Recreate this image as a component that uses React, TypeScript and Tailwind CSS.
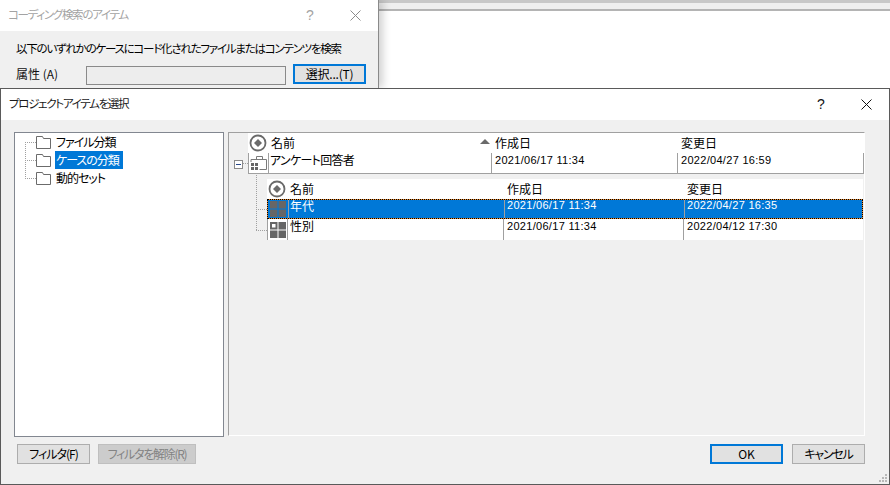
import React from 'react';

const uiFont = "font-['Noto_Sans_CJK_JP','Noto_Sans',sans-serif] [font-feature-settings:'palt']";
const dateFont = "font-['Liberation_Sans',sans-serif] text-[11px] tracking-[0.3px]";

function CloseGlyph({ color }: { color: string }) {
  return (
    <svg width="11" height="11" viewBox="0 0 11 11" fill="none" stroke={color} strokeWidth="1">
      <path d="M0.5 0.5 L10.5 10.5 M10.5 0.5 L0.5 10.5" />
    </svg>
  );
}

function Folder() {
  return (
    <svg width="15" height="13" viewBox="0 0 15 13" fill="none" stroke="#6b6b6b" strokeWidth="1" className="shrink-0">
      <path d="M0.5 12.5 V0.5 H6.5 L7.5 2.5 H14.5 V12.5 Z" />
    </svg>
  );
}

function SortRing() {
  return (
    <svg width="18" height="18" viewBox="0 0 18 18" className="shrink-0">
      <circle cx="9" cy="9" r="7.5" fill="#fff" stroke="#6a6a6a" strokeWidth="1.8" />
      <path d="M9 5 L13 9 L9 13 L5 9 Z" fill="#6a6a6a" />
    </svg>
  );
}

function Briefcase() {
  return (
    <svg width="18" height="18" viewBox="0 0 18 18" className="shrink-0">
      <path d="M1 8 V5.5 H16.500 V15.500 H9.500" fill="none" stroke="#7a7a7a" strokeWidth="1" />
      <path d="M6.5 5 V2.5 H12.5 V5" fill="none" stroke="#7a7a7a" strokeWidth="1" />
      <path d="M1 9h3v3H1z M5 9h3v3H5z M1 13h3v3H1z M5 13h3v3H5z" fill="#666" />
    </svg>
  );
}

function Squares({ hollow }: { hollow?: boolean }) {
  return (
    <svg width="18" height="18" viewBox="0 0 18 18" className="shrink-0">
      <rect x="1" y="1" width="7.500" height="7.500" fill="#666" />
      {hollow && <rect x="3" y="3" width="3.500" height="3.500" fill="#fff" />}
      <rect x="9.500" y="1" width="7.500" height="7.500" fill="#666" />
      <rect x="1" y="9.500" width="7.500" height="7.500" fill="#666" />
      <rect x="9.500" y="9.500" width="7.500" height="7.500" fill="#666" />
    </svg>
  );
}

function TitleBar({ title, muted }: { title: string; muted?: boolean }) {
  return (
    <div className="h-[31px] shrink-0 bg-white flex items-center">
      <span className={`pl-2 pb-[1px] text-[11.5px] tracking-[-1.3px] ${muted ? 'text-[#a3a3a3]' : 'text-[#1a1a1a]'}`}>{title}</span>
      <div className="ml-auto flex items-center">
        <span className={`w-[46px] text-center text-[14px] pl-[2px] font-['Liberation_Sans',sans-serif] ${muted ? 'text-[#a3a3a3]' : 'text-[#111]'}`}>?</span>
        <span className="w-[46px] flex justify-center">
          <CloseGlyph color={muted ? '#8c8c8c' : '#111'} />
        </span>
      </div>
    </div>
  );
}

function Button({ label, variant, className }: { label: string; variant?: 'focus' | 'disabled'; className?: string }) {
  const look =
    variant === 'focus'
      ? 'bg-[#e1e1e1] border-2 border-[#0078d7] text-black'
      : variant === 'disabled'
        ? 'bg-[#cccccc] border border-[#bfbfbf] text-[#838383]'
        : 'bg-[#e1e1e1] border border-[#adadad] text-black';
  return (
    <div className={`h-[20px] flex items-center justify-center text-[12px] leading-none whitespace-nowrap ${look} ${className ?? ''}`}>
      {label}
    </div>
  );
}

function TreeRow({ label, selected }: { label: string; selected?: boolean }) {
  return (
    <div className="h-[18px] flex items-center pl-[21px]">
      <Folder />
      <span className={`ml-[4px] h-[18px] flex items-center px-[1px] text-[12px] tracking-[-1px] leading-none ${selected ? 'bg-[#0078d7] text-white pr-[4px]' : 'text-black'}`}>
        {label}
      </span>
    </div>
  );
}

const parentCols = 'grid grid-cols-[20px_223px_186px_187px]';
const childCols = 'grid grid-cols-[20px_216px_180px_180px]';
const sep = 'border-l border-[#a0a0a0]';

function ChildRow({ name, created, changed, selected }: { name: string; created: string; changed: string; selected?: boolean }) {
  const lead = selected ? 'leading-[11px]' : 'leading-[14px]';
  const body = (
    <div className={`${childCols} h-full ${selected ? 'bg-[#0078d7] text-white' : 'bg-white text-black'}`}>
      <div className={`flex items-center justify-center ${selected ? '' : 'border-l border-[#a0a0a0]'}`}>
        <Squares hollow={!selected} />
      </div>
      <div className={`${sep} ${selected ? 'pl-[1px]' : 'pl-[2px]'} text-[12px] ${lead}`}>{name}</div>
      <div className={`${sep} ${selected ? 'pl-[2px]' : 'pl-[3px]'} ${dateFont} ${lead}`}>{created}</div>
      <div className={`${sep} ${selected ? 'pl-[2px]' : 'pl-[3px]'} ${dateFont} ${lead}`}>{changed}</div>
    </div>
  );
  if (selected) {
    return <div className="h-[20px] bg-[#e8872a] border border-dotted border-black">{body}</div>;
  }
  return <div className="h-[21px]">{body}</div>;
}

export default function App() {
  return (
    <div className={`relative w-[890px] h-[485px] overflow-hidden bg-white ${uiFont}`}>
      {/* window behind */}
      <div className="h-[3px] bg-[#c8c8c8]" />
      <div className="h-[6px] bg-[#efefef]" />
      <div className="h-[2px] bg-[#b4b4b4]" />

      <div className="absolute left-0 top-0 w-[379px] h-[88px] flex flex-col bg-[#f0f0f0] border-r border-[#8a8a8a] shadow-[4px_0_8px_rgba(0,0,0,0.18)]">
        <TitleBar title="コーディング検索のアイテム" muted />
        <div className="pl-4 pt-[9px] text-[11.5px] tracking-[-1.23px] leading-[16px] text-black whitespace-nowrap">
          以下のいずれかのケースにコード化されたファイルまたはコンテンツを検索
        </div>
        <div className="flex items-start pl-4 pt-[8px]">
          <span className="w-[70px] text-[12px] leading-[20px] text-[#111]">属性 (A)</span>
          <div className="w-[200px] h-[19px] mt-[2px] bg-[#ededed] border border-[#8a8a8a]" />
          <Button label="選択...(T)" variant="focus" className="w-[73px] ml-[7px] tracking-[-0.2px]" />
        </div>
      </div>

      {/* main dialog */}
      <div className="absolute left-0 top-[88px] w-[890px] h-[397px] flex flex-col bg-[#f0f0f0] border border-[#5a5a5a]">
        <TitleBar title="プロジェクトアイテムを選択" />

        <div className="flex pl-[13px] pt-[12px] gap-[4px] h-[317px] shrink-0">
          {/* tree */}
          <div className="relative w-[210px] h-[305px] bg-white border border-[#828790]">
            <svg className="absolute left-[9px] top-[8px]" width="12" height="38" fill="none" stroke="#a0a0a0" strokeDasharray="1 1">
              <path d="M1.500 1 V37 M1 1.500 H12 M1 19.500 H12 M1 37.500 H12" />
            </svg>
            <TreeRow label="ファイル分類" />
            <TreeRow label="ケースの分類" selected />
            <TreeRow label="動的セット" />
          </div>

          {/* detail grid */}
          <div className="relative w-[637px] h-[304px] border-t border-l border-[#a0a0a0] border-b border-b-white border-r border-r-white">
            <div className="ml-[19px] w-[616px]">
              <div className={`${parentCols} h-[20px] bg-white text-black text-[12px] leading-none`}>
                <div className="flex items-center justify-center"><SortRing /></div>
                <div className="relative flex items-center pl-[3px]">
                  名前
                  <span className="absolute right-[1px] top-[6px] w-0 h-0 border-x-[5px] border-x-transparent border-b-[5px] border-b-[#6a6a6a]" />
                </div>
                <div className="flex items-center pl-[4px]">作成日</div>
                <div className="flex items-center pl-[4px]">変更日</div>
              </div>
              <div className={`${parentCols} h-[21px] bg-white text-black border-b border-r border-[#a0a0a0]`}>
                <div className="flex items-center justify-center border-l border-[#a0a0a0]"><Briefcase /></div>
                <div className={`${sep} pl-[1px] text-[12px] tracking-[-0.7px] leading-[14px]`}>アンケート回答者</div>
                <div className={`${sep} pl-[3px] ${dateFont} leading-[14px]`}>2021/06/17 11:34</div>
                <div className={`${sep} pl-[3px] ${dateFont} leading-[14px]`}>2022/04/27 16:59</div>
              </div>
            </div>

            <div className="ml-[38px] w-[596px] mt-[5px]">
              <div className={`${childCols} h-[20px] bg-white text-black text-[12px] leading-none`}>
                <div className="flex items-center justify-center"><SortRing /></div>
                <div className="flex items-center pl-[3px]">名前</div>
                <div className="flex items-center pl-[4px]">作成日</div>
                <div className="flex items-center pl-[4px]">変更日</div>
              </div>
              <ChildRow name="年代" created="2021/06/17 11:34" changed="2022/04/27 16:35" selected />
              <ChildRow name="性別" created="2021/06/17 11:34" changed="2022/04/12 17:30" />
            </div>

            {/* expander and tree lines */}
            <div className="absolute left-[5px] top-[27px] w-[9px] h-[9px] bg-white border border-[#8a8a8a] flex items-center justify-center">
              <span className="w-[5px] h-[1px] bg-[#2a4a8a]" />
            </div>
            <svg className="absolute left-[14px] top-[30px]" width="25" height="68" fill="none" stroke="#a0a0a0" strokeDasharray="1 1">
              <path d="M0 0.500 H5 M13.500 10 V68 M13 46.500 H25 M13 67.500 H25" />
            </svg>
          </div>
        </div>

        <div className="flex pl-[16px] pr-[24px] pt-[7px]">
          <Button label="フィルタ(F)" className="w-[73px] tracking-[-1px]" />
          <Button label="フィルタを解除(R)" variant="disabled" className="w-[98px] ml-[8px] tracking-[-1.3px]" />
          <Button label="OK" variant="focus" className="w-[73px] ml-auto" />
          <Button label="キャンセル" className="w-[73px] ml-[9px] tracking-[-1.2px]" />
        </div>

        {/* resize grip */}
        <svg className="absolute right-[1px] bottom-[1px]" width="9" height="9" fill="#b8b8b8">
          <path d="M6 0h2v2H6z M3 3h2v2H3z M6 3h2v2H6z M0 6h2v2H0z M3 6h2v2H3z M6 6h2v2H6z" />
        </svg>
      </div>
    </div>
  );
}
